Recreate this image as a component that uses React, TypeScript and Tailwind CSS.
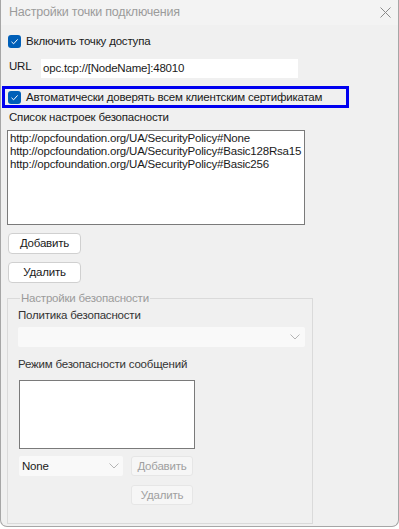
import React from "react";

const font = { fontFamily: '"Liberation Sans", Arial, sans-serif' };

const Check = () => (
    <span className="flex h-[13px] w-[13px] shrink-0 items-center justify-center rounded-[3px] bg-[#005fb8]">
        <svg width="9" height="9" viewBox="0 0 9 9" fill="none">
            <path d="M1.5 4.8 L3.6 6.8 L7.6 2.4" stroke="#ffffff" strokeWidth="1" />
        </svg>
    </span>
);

const Chevron = () => (
    <svg width="10" height="6" viewBox="0 0 10 6" fill="none">
        <path d="M0.5 0.5 L5 5 L9.5 0.5" stroke="#b4b4b4" strokeWidth="1" />
    </svg>
);

const Btn: React.FC<{ label: string; disabled?: boolean; className?: string }> = ({ label, disabled, className }) => (
    <button
        className={
            disabled
                ? "flex h-[20px] w-[62px] items-center justify-center rounded-[3px] border border-[#e6e6e6] bg-[#f6f6f6] text-[#a0a0a0] " + (className ?? "")
                : "flex h-[21px] w-[73px] items-center justify-center rounded-[4px] border border-[#d0d0d0] bg-white text-[#1a1a1a] " + (className ?? "")
        }
    >
        {label}
    </button>
);

export default function App() {
    return (
        <div className="h-[529px] w-[399px] bg-white text-[11.5px] leading-[15px] tracking-[-0.2px] text-[#1a1a1a]" style={font}>
            <div className="flex h-[527px] w-[399px] flex-col rounded-b-[7px] border-x border-b border-[#a6a6a6] bg-[#f0f0f0]">
                <div className="flex h-[25px] shrink-0 items-center justify-between bg-[#f3f3f3] pl-[8px] pr-[7px]">
                    <span className="text-[12.5px] text-[#9b9b9b]">Настройки точки подключения</span>
                    <svg width="11" height="11" viewBox="0 0 11 11" fill="none">
                        <path d="M0.5 0.5 L10.5 10.5 M10.5 0.5 L0.5 10.5" stroke="#8a8a8a" strokeWidth="1" />
                    </svg>
                </div>

                <div className="mt-[9px] flex items-center gap-[5px] pl-[7px]">
                    <Check />
                    <span>Включить точку доступа</span>
                </div>

                <div className="mt-[10px] flex items-center pl-[8px]">
                    <span className="w-[32px] pb-[4px]">URL</span>
                    <div className="flex h-[19px] w-[257px] items-center bg-white pl-[2px]">opc.tcp://[NodeName]:48010</div>
                </div>

                <div className="ml-[1px] mt-[8px] flex h-[22px] w-[347px] shrink-0 items-center gap-[5px] border-[3px] border-[#0000f0] pl-[3px]">
                    <Check />
                    <span className="whitespace-nowrap">Автоматически доверять всем клиентским сертификатам</span>
                </div>

                <div className="mt-[2px] pl-[8px]">Список настроек безопасности</div>

                <div className="ml-[6px] mt-[5px] h-[95px] w-[298px] shrink-0 whitespace-nowrap border border-[#7a7a7a] bg-white pl-[2px] pt-[1px] leading-[13px]">
                    <div>http://opcfoundation.org/UA/SecurityPolicy#None</div>
                    <div>http://opcfoundation.org/UA/SecurityPolicy#Basic128Rsa15</div>
                    <div>http://opcfoundation.org/UA/SecurityPolicy#Basic256</div>
                </div>

                <Btn label="Добавить" className="ml-[7px] mt-[8px] shrink-0" />
                <Btn label="Удалить" className="ml-[7px] mt-[8px] shrink-0" />

                <fieldset className="ml-[6px] mt-[8px] h-[233px] w-[306px] shrink-0 border border-[#dadada] pl-[10px]">
                    <legend className="ml-[2px] px-[1px] text-[#9b9b9b]">Настройки безопасности</legend>
                    <div className="mt-[2px] text-[#333]">Политика безопасности</div>
                    <div className="mt-[4px] flex h-[20px] w-[287px] items-center justify-end rounded-[2px] bg-[#f9f9f9] pr-[5px]">
                        <Chevron />
                    </div>
                    <div className="mt-[10px] text-[#333]">Режим безопасности сообщений</div>
                    <div className="ml-[1px] mt-[8px] h-[69px] w-[176px] border border-[#7a7a7a] bg-white" />
                    <div className="mt-[7px] flex gap-[8px] pl-[1px]">
                        <div className="flex h-[20px] w-[104px] items-center justify-between rounded-[2px] bg-[#f9f9f9] pl-[3px] pr-[4px]">
                            <span>None</span>
                            <Chevron />
                        </div>
                        <Btn label="Добавить" disabled />
                    </div>
                    <Btn label="Удалить" disabled className="ml-[113px] mt-[9px]" />
                </fieldset>
            </div>
        </div>
    );
}
